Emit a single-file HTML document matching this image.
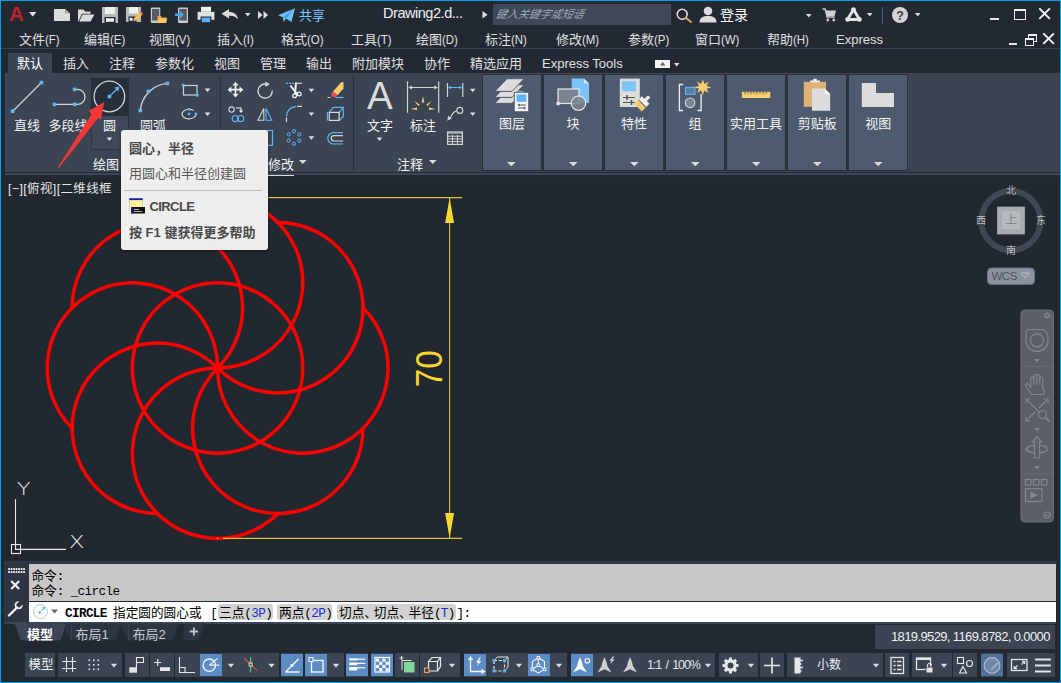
<!DOCTYPE html>
<html lang="zh-CN">
<head>
<meta charset="utf-8">
<title>AutoCAD - Drawing2.dwg</title>
<style>
*{box-sizing:border-box;margin:0;padding:0}
html,body{width:1061px;height:683px;overflow:hidden;background:#222933}
body{font-family:"Liberation Sans","Noto Sans CJK SC",sans-serif;font-size:13px;color:#e6e6e6;position:relative}
.abs{position:absolute}
#win{position:absolute;left:0;top:0;width:1061px;height:683px;background:#222933;border:1px solid #00a0e4;box-shadow:inset 0 0 0 1px #27252d;overflow:hidden}
#root{position:absolute;left:-1px;top:-1px;width:1061px;height:683px}
.t{position:absolute;white-space:nowrap;line-height:1}
/* title bar */
#menubar .t{top:32.500px;font-size:13px;color:#e0e0e0}
#tabs .t{top:56.500px;font-size:13px;color:#e0e0e0}
#tabline{position:absolute;left:1px;top:48px;width:1059px;height:1px;background:#3a4352}
#tabactive{position:absolute;left:8px;top:53px;width:44px;height:21px;background:#3b4453}
#ribbon{position:absolute;left:5px;top:73px;width:1055px;height:102px;background:#3b4453}
.panel{position:absolute;top:74.800px;height:95.400px;background:#4e5a6e}
.plabel{position:absolute;font-size:13.5px;color:#f2f2f2;white-space:nowrap;line-height:1}
#draw{position:absolute;left:1px;top:179px;width:1059px;height:381px;background:#212830}
#cmdhist{position:absolute;left:29px;top:564px;width:1027px;height:37px;background:#c8c8c8}
#cmdline{position:absolute;left:29px;top:602px;width:1027px;height:20px;background:#fff}
.mono{font-family:"Liberation Mono","Noto Sans CJK SC",monospace}
.cm{font-family:"Noto Sans CJK SC",sans-serif;font-size:12.670px;color:#000}
.la{font-family:"Liberation Mono",monospace;font-size:12.670px;letter-spacing:-.63px}
.dn{margin-right:-3.2px}
.pf{display:inline-block;transform:scaleX(.88);transform-origin:0 50%}
.bl{font-weight:normal;color:#1a2ed8}
</style>
</head>
<body>
<div id="win"><div id="root">

<!-- TITLE BAR -->
<div id="titlebar">
<!-- A logo -->
<span class="t" style="left:9px;top:4.400px;font-size:20.500px;font-weight:bold;color:#bf222b;font-family:'Liberation Sans',sans-serif">A</span>
<svg class="abs" style="left:29px;top:12px" width="8" height="5"><path d="M0 0h7.5L3.75 4.5z" fill="#e0e0e0"/></svg>
<!-- new -->
<svg class="abs" style="left:54px;top:8px" width="17" height="14"><path d="M0 1h11l5 4.5V13H0z" fill="#dcdcdc"/><path d="M11 1v4.5h5z" fill="#222933" opacity=".0"/><path d="M11.4 0.6L16.4 5.2" stroke="#222933" stroke-width="0" /><path d="M11 1l5 4.5h-5z" fill="#a8a8a8"/></svg>
<!-- open -->
<svg class="abs" style="left:77px;top:8px" width="18" height="14"><path d="M1 13V1.5h5.5l1.5 2h5.5v2.3H5L1.6 13z" fill="#dcdcdc"/><path d="M5.6 6.6H17.4L13.6 13.4H2.2z" fill="#dcdcdc"/></svg>
<!-- save -->
<svg class="abs" style="left:101px;top:6px" width="18" height="18"><path d="M1 1h16v16H1z" fill="#b9b9b9"/><path d="M4 1h10v7H4z" fill="#f0f0f0"/><path d="M3.5 11h11v6h-11z" fill="#222933"/><path d="M5 12.3h8v3.4H5z" fill="#f0f0f0"/><path d="M5 12.3h2.4v3.4H5z" fill="#f0f0f0"/></svg>
<!-- save as -->
<svg class="abs" style="left:125px;top:6px" width="18" height="18"><path d="M1 1h15v15H1z" fill="#b9b9b9"/><path d="M4 1h9v6.5H4z" fill="#f0f0f0"/><path d="M3.5 10.5h8v5.5h-8z" fill="#222933"/><path d="M4.6 11.8h3v3h-3z" fill="#f0f0f0"/><path d="M8 15.5l1-3.4 5.8-5.8 2.4 2.4-5.8 5.8z" fill="#f2c24a"/><path d="M14.8 6.3l1.2-1.2 2.4 2.4-1.2 1.2z" fill="#e8484f"/><path d="M8 15.5l.5-1.8 1.3 1.3z" fill="#444"/></svg>
<!-- open from mobile -->
<svg class="abs" style="left:150px;top:7px" width="18" height="17"><rect x=".8" y=".5" width="9.5" height="15.5" rx="1" fill="#c9c9c9"/><rect x="2" y="2" width="7.2" height="11.5" fill="#555b66"/><path d="M7.5 16V9h3.4l1 1.4h4.6V16z" fill="#e9a93a"/><path d="M9 11.6h8.2L15.6 16H7.5z" fill="#f6cd6a"/></svg>
<!-- save to mobile -->
<svg class="abs" style="left:175px;top:7px" width="14" height="17"><rect x="3" y=".5" width="10" height="15.5" rx="1" fill="#c9c9c9"/><rect x="4.2" y="2" width="7.6" height="11.5" fill="#555b66"/><path d="M0 6.4h5V4l4 3.7-4 3.700V9H0z" fill="#4aa3ea"/></svg>
<!-- print -->
<svg class="abs" style="left:197px;top:6px" width="18" height="18"><path d="M4 .8h10v5H4z" fill="#f0f0f0"/><path d="M.6 5.8h16.8v8H.6z" fill="#e0e0e0"/><path d="M3.6 10.500h10.800V17H3.6z" fill="#222933"/><path d="M4.800 11.600h8.400v4.600H4.800z" fill="#5db1f3"/></svg>
<!-- undo -->
<svg class="abs" style="left:221px;top:9px" width="18" height="11"><path d="M.5 4.800L8 0v3c5 0 8.600 2.500 9 7.600C15.500 7.800 12.500 6.600 8 6.800V9.600z" fill="#dcdcdc"/></svg>
<svg class="abs" style="left:245px;top:13px" width="6" height="4"><path d="M0 0h5.500L2.750 3.500z" fill="#e0e0e0"/></svg>
<svg class="abs" style="left:258px;top:11px" width="11" height="9"><path d="M0 0l4.500 4L0 8zM5.500 0L10 4 5.500 8z" fill="#e0e0e0"/></svg>
<!-- share -->
<svg class="abs" style="left:278px;top:7.500px" width="18" height="15"><path d="M0 7.200L17 .2 13.400 14 8 10.400 5.600 14.200 5 9.200z" fill="#6ec0fa"/><path d="M5 9.200L17 .2 8 10.400" fill="#4a9ad8"/></svg>
<span class="t" style="left:299px;top:8.500px;font-size:13px;color:#7fc6ff">共享</span>
<span class="t" style="left:383px;top:6px;font-size:14.500px;color:#f0f0f0;letter-spacing:-.46px">Drawing2.d...</span>
<svg class="abs" style="left:482px;top:11px" width="6" height="8"><path d="M.5 0L5.500 3.700.5 7.400z" fill="#e0e0e0"/></svg>
<div class="abs" style="left:493px;top:4px;width:178px;height:21px;background:#3f4859"></div>
<span class="t" style="left:496px;top:9px;font-size:11px;color:#a0a8b4;font-style:italic;transform:skewX(-12deg)">键入关键字或短语</span>
<svg class="abs" style="left:676px;top:8px" width="17" height="15"><circle cx="6.200" cy="6.200" r="5" fill="none" stroke="#e6e6e6" stroke-width="1.500"/><path d="M10 10l5 4" stroke="#d9a760" stroke-width="2" stroke-linecap="round"/></svg>
<!-- user -->
<svg class="abs" style="left:699px;top:6px" width="18" height="17"><circle cx="9" cy="5" r="4.300" fill="#dcdcdc"/><path d="M.5 16.500c0-5 3.500-6.500 8.500-6.500s8.500 1.500 8.500 6.500z" fill="#dcdcdc"/></svg>
<span class="t" style="left:720px;top:8px;font-size:14px;color:#fff">登录</span>
<svg class="abs" style="left:806px;top:14px" width="6" height="4"><path d="M0 0h5.500L2.750 3.500z" fill="#e0e0e0"/></svg>
<!-- cart -->
<svg class="abs" style="left:822px;top:8px" width="15" height="14"><path d="M.5 1h2.600l2 8h7.600" fill="none" stroke="#cfcfcf" stroke-width="1.400"/><path d="M3.600 2.600h10.400l-1.400 5.400H5z" fill="#cfcfcf"/><circle cx="5.800" cy="12" r="1.400" fill="#cfcfcf"/><circle cx="11.800" cy="12" r="1.400" fill="#cfcfcf"/></svg>
<!-- A360 -->
<svg class="abs" style="left:845px;top:7px" width="17" height="15"><path d="M8.500 2.500L2.500 12.500H14.500z" fill="none" stroke="#e6e6e6" stroke-width="2.800" stroke-linejoin="round"/><circle cx="8.500" cy="2.600" r="2.400" fill="#e6e6e6"/><circle cx="2.600" cy="12.400" r="2.300" fill="#e6e6e6"/><circle cx="14.400" cy="12.400" r="2.300" fill="#e6e6e6"/></svg>
<svg class="abs" style="left:867px;top:13px" width="6" height="4"><path d="M0 0h5.500L2.750 3.500z" fill="#e0e0e0"/></svg>
<div class="abs" style="left:882px;top:7px;width:1px;height:17px;background:#4b5c73"></div>
<svg class="abs" style="left:892px;top:7px" width="16" height="16"><circle cx="8" cy="8" r="8" fill="#d4d4d4"/><text x="8" y="12.600" text-anchor="middle" font-family="Liberation Sans,sans-serif" font-weight="bold" font-size="12.500" fill="#3a3f4a">?</text></svg>
<svg class="abs" style="left:915px;top:13px" width="6" height="4"><path d="M0 0h5.500L2.750 3.500z" fill="#e0e0e0"/></svg>
<!-- window buttons -->
<div class="abs" style="left:990px;top:18px;width:9px;height:2px;background:#e6e6e6"></div>
<div class="abs" style="left:1014px;top:9px;width:12px;height:11px;border:1px solid #f0f0f0;border-top-width:2px"></div>
<svg class="abs" style="left:1038px;top:7px" width="13" height="13"><path d="M1.300 1.300l10.600 10.600M11.900 1.300L1.300 11.900" stroke="#f4f4f4" stroke-width="1.900"/></svg>
<!-- doc window buttons -->
<div class="abs" style="left:1009px;top:43px;width:8px;height:2px;background:#e6e6e6"></div>
<div class="abs" style="left:1028px;top:34px;width:9px;height:8px;border:1px solid #f0f0f0;border-top-width:2px"></div>
<div class="abs" style="left:1025px;top:38px;width:9px;height:8px;border:1px solid #f0f0f0;border-top-width:2px;background:#222933"></div>
<svg class="abs" style="left:1042px;top:32px" width="13" height="13"><path d="M1.300 1.300l10.600 10.600M11.900 1.300L1.300 11.900" stroke="#f4f4f4" stroke-width="1.900"/></svg>
</div>

<!-- MENU BAR -->
<div id="menubar">
<span class="t" style="left:19px">文件<span class="pf">(F)</span></span>
<span class="t" style="left:84px">编辑<span class="pf">(E)</span></span>
<span class="t" style="left:149px">视图<span class="pf">(V)</span></span>
<span class="t" style="left:217px">插入<span class="pf">(I)</span></span>
<span class="t" style="left:281px">格式<span class="pf">(O)</span></span>
<span class="t" style="left:351px">工具<span class="pf">(T)</span></span>
<span class="t" style="left:416px">绘图<span class="pf">(D)</span></span>
<span class="t" style="left:485px">标注<span class="pf">(N)</span></span>
<span class="t" style="left:556px">修改<span class="pf">(M)</span></span>
<span class="t" style="left:628px">参数<span class="pf">(P)</span></span>
<span class="t" style="left:695px">窗口<span class="pf">(W)</span></span>
<span class="t" style="left:767px">帮助<span class="pf">(H)</span></span>
<span class="t" style="left:836px">Express</span>
</div>
<div id="tabline"></div>

<!-- RIBBON TABS -->
<div id="tabactive"></div>
<div id="tabs">
<span class="t" style="left:17px;color:#fff">默认</span>
<span class="t" style="left:63px">插入</span>
<span class="t" style="left:109px">注释</span>
<span class="t" style="left:155px">参数化</span>
<span class="t" style="left:214px">视图</span>
<span class="t" style="left:260px">管理</span>
<span class="t" style="left:306px">输出</span>
<span class="t" style="left:352px">附加模块</span>
<span class="t" style="left:424px">协作</span>
<span class="t" style="left:470px">精选应用</span>
<span class="t" style="left:542px">Express Tools</span>
</div>

<!-- RIBBON BODY -->
<div id="ribbon"></div>
<div id="ribboncontent">
<div class="abs" style="left:5px;top:172px;width:1055px;height:1px;background:#262d39"></div><div class="abs" style="left:5px;top:173px;width:1055px;height:2px;background:#3e4757"></div>
<!-- tab extra icon -->
<div class="abs" style="left:655px;top:60px;width:15px;height:8px;background:#f4f4f4"></div>
<svg class="abs" style="left:660px;top:62px" width="6" height="4"><path d="M0 3.500h5.400L2.700 0z" fill="#666"/></svg>
<svg class="abs" style="left:674px;top:63px" width="6" height="4"><path d="M0 0h5.500L2.750 3.500z" fill="#e0e0e0"/></svg>
<!-- circle button highlight -->
<div class="abs" style="left:91px;top:78px;width:37.500px;height:38px;background:#272f3b"></div>
<div class="abs" style="left:91px;top:116px;width:37.500px;height:34px;background:#3f4858;border:1px solid #2d3440;border-top:none"></div>
<!-- separators -->
<div class="abs" style="left:220px;top:75px;width:1px;height:96px;background:#2b323e"></div>
<div class="abs" style="left:353px;top:75px;width:1px;height:96px;background:#2b323e"></div>
<div class="abs" style="left:481.500px;top:73.700px;width:426.800px;height:97.600px;background:#2a313d"></div>
<div class="panel" style="left:482.7px;width:58.4px"></div>
<span class="plabel" style="left:481.9px;width:60px;text-align:center;top:117px;font-size:13px">图层</span>
<svg class="abs" style="left:507.4px;top:161.5px" width="9" height="5"><path d="M0 0h8.600L4.300 4.300z" fill="#dcdcdc"/></svg>
<div class="panel" style="left:543.8px;width:58.4px"></div>
<span class="plabel" style="left:543.0px;width:60px;text-align:center;top:117px;font-size:13px">块</span>
<svg class="abs" style="left:568.5px;top:161.5px" width="9" height="5"><path d="M0 0h8.600L4.300 4.300z" fill="#dcdcdc"/></svg>
<div class="panel" style="left:604.8px;width:58.4px"></div>
<span class="plabel" style="left:604.0px;width:60px;text-align:center;top:117px;font-size:13px">特性</span>
<svg class="abs" style="left:629.5px;top:161.5px" width="9" height="5"><path d="M0 0h8.600L4.300 4.300z" fill="#dcdcdc"/></svg>
<div class="panel" style="left:665.8px;width:58.4px"></div>
<span class="plabel" style="left:665.0px;width:60px;text-align:center;top:117px;font-size:13px">组</span>
<svg class="abs" style="left:690.5px;top:161.5px" width="9" height="5"><path d="M0 0h8.600L4.300 4.300z" fill="#dcdcdc"/></svg>
<div class="panel" style="left:726.9px;width:58.4px"></div>
<span class="plabel" style="left:726.1px;width:60px;text-align:center;top:117px;font-size:13px">实用工具</span>
<svg class="abs" style="left:751.6px;top:161.5px" width="9" height="5"><path d="M0 0h8.600L4.300 4.300z" fill="#dcdcdc"/></svg>
<div class="panel" style="left:788.0px;width:58.4px"></div>
<span class="plabel" style="left:787.2px;width:60px;text-align:center;top:117px;font-size:13px">剪贴板</span>
<svg class="abs" style="left:812.7px;top:161.5px" width="9" height="5"><path d="M0 0h8.600L4.300 4.300z" fill="#dcdcdc"/></svg>
<div class="panel" style="left:849.0px;width:58.4px"></div>
<span class="plabel" style="left:848.2px;width:60px;text-align:center;top:117px;font-size:13px">视图</span>
<svg class="abs" style="left:873.7px;top:161.5px" width="9" height="5"><path d="M0 0h8.600L4.300 4.300z" fill="#dcdcdc"/></svg>
<svg class="abs" style="left:0;top:73px" width="1061" height="103" viewBox="0 73 1061 103">
<g id="ic-line"><path d="M13 111L41 83" stroke="#d4d4d4" stroke-width="1.200"/><rect x="10.800" y="109.400" width="3.600" height="3.600" fill="#62b5f5"/><rect x="39.600" y="80.800" width="3.600" height="3.600" fill="#62b5f5"/></g>
<g id="ic-pline"><path d="M54.500 104.400H77.500a7.500 7.500 0 0 0 0-15H75" fill="none" stroke="#d4d4d4" stroke-width="1.300"/><rect x="52.700" y="102.600" width="3.600" height="3.600" fill="#62b5f5"/><rect x="72.800" y="102.600" width="3.600" height="3.600" fill="#62b5f5"/><rect x="72.800" y="87.600" width="3.600" height="3.600" fill="#62b5f5"/></g>
<g id="ic-circle"><circle cx="109.400" cy="96.500" r="15.300" fill="none" stroke="#d4d4d4" stroke-width="1.300"/><path d="M111 95L117 89" stroke="#62b5f5" stroke-width="1.300"/><path d="M119.400 86.600l-1 5-4-4z" fill="#62b5f5"/><rect x="107.600" y="94.700" width="3.600" height="3.600" fill="#62b5f5"/></g>
<g id="ic-arc"><path d="M140.300 110.400A29.700 29.700 0 0 1 167.400 83.400" fill="none" stroke="#d4d4d4" stroke-width="1.300"/><rect x="138.500" y="108.600" width="3.600" height="3.600" fill="#62b5f5"/><rect x="146.600" y="89.600" width="3.600" height="3.600" fill="#62b5f5"/><rect x="165.600" y="81.600" width="3.600" height="3.600" fill="#62b5f5"/></g>
<g id="ic-rect"><rect x="183.500" y="85.500" width="13.500" height="9.500" fill="none" stroke="#d4d4d4" stroke-width="1.200"/><rect x="181.800" y="83.800" width="2.800" height="2.800" fill="#62b5f5"/><rect x="195.800" y="93.800" width="2.800" height="2.800" fill="#62b5f5"/></g>
<path d="M204.700 88.500h5.600l-2.800 3.500z" fill="#dcdcdc"/>
<g id="ic-ellipse"><path d="M193.500 110.500A7 4.700 0 1 0 195.800 113" fill="none" stroke="#d4d4d4" stroke-width="1.200"/><rect x="187.800" y="112.700" width="2.400" height="2.400" fill="#62b5f5"/><rect x="187.800" y="108" width="2.400" height="2.400" fill="#62b5f5"/><rect x="194.700" y="112.700" width="2.400" height="2.400" fill="#62b5f5"/></g>
<path d="M204.700 112.600h5.600l-2.800 3.500z" fill="#dcdcdc"/>
<!-- modify -->
<g id="ic-move" fill="#f0f0f0"><path d="M235.500 81.800l3.200 3.800h-2.300v3.200h3.200v-2.300l3.800 3.200-3.800 3.200v-2.300h-3.200v3.200h2.300l-3.200 3.800-3.200-3.800h2.300v-3.200h-3.200v2.300l-3.800-3.200 3.800-3.200v2.300h3.200v-3.200h-2.300z"/></g>
<g id="ic-rotate"><path d="M265.100 84A7.100 7.100 0 1 0 272.200 90.600" fill="none" stroke="#e0e0e0" stroke-width="1.300"/><path d="M265.300 81.500l4.400 2.700-4.400 2.900z" fill="#e0e0e0"/></g>
<g id="ic-trim"><path d="M285.800 83.400h8.500" stroke="#62b5f5" stroke-width="1.200" stroke-dasharray="2.200 .8"/><path d="M297 83.300h5" stroke="#d4d4d4" stroke-width="1.200"/><path d="M290.300 85.500l7.500 9.500M296 82.500l-1 12" stroke="#f4f4f4" stroke-width="2"/><circle cx="294.600" cy="95.800" r="1.900" fill="none" stroke="#f4f4f4" stroke-width="1.200"/><circle cx="299.200" cy="94" r="1.900" fill="none" stroke="#f4f4f4" stroke-width="1.200"/></g>
<path d="M308.600 88.800h5.600l-2.800 3.500z" fill="#dcdcdc"/>
<g id="ic-erase"><path d="M333 91.500l8.500-9.500 2 .2v6.300l-6 6.700z" fill="#f5ce6e"/><path d="M333 91.500l4.500 3.700-1.400 1.400c-1.500 1-3.800.6-4.600-.6-.6-1-.2-2.600.5-3.300z" fill="#ee4a5a"/><path d="M327.500 97.500h3" stroke="#d4d4d4" stroke-width="1"/><path d="M335.500 97.500h8" stroke="#62b5f5" stroke-width="1.200"/></g>
<g id="ic-copy"><circle cx="231.600" cy="109.600" r="2.700" fill="none" stroke="#d4d4d4" stroke-width="1.100"/><path d="M236 108h5v3" fill="none" stroke="#f0f0f0" stroke-width="1.200"/><path d="M238.800 110.500h4.400l-2.200 2.600z" fill="#f0f0f0"/><circle cx="235.300" cy="118.600" r="3.100" fill="none" stroke="#62b5f5" stroke-width="1.200"/><circle cx="240.700" cy="118.600" r="3.100" fill="none" stroke="#62b5f5" stroke-width="1.200"/></g>
<g id="ic-mirror"><path d="M263.800 108.500v11.700h-5.800z" fill="none" stroke="#d4d4d4" stroke-width="1.100"/><path d="M266 108.500v11.700h5.800z" fill="none" stroke="#62b5f5" stroke-width="1.100"/></g>
<g id="ic-fillet"><path d="M286.500 116.300A9.800 9.800 0 0 1 295.800 106.500" fill="none" stroke="#62b5f5" stroke-width="1.300"/><path d="M286.500 117.300v4.700M297 106.400h5" stroke="#d4d4d4" stroke-width="1.200"/></g>
<path d="M308.600 112.600h5.600l-2.800 3.500z" fill="#dcdcdc"/>
<g id="ic-box"><path d="M329.200 112.300L333.200 107.400H343.300L339.200 112.300M343.300 107.400V116.400L339.200 120.400M327.400 112V120.500" fill="none" stroke="#62b5f5" stroke-width="1.100"/><rect x="329.300" y="112.400" width="9.800" height="8" fill="none" stroke="#dcdcdc" stroke-width="1.200"/></g>
<g id="ic-stretch"><rect x="262" y="130.500" width="10.500" height="14.800" fill="none" stroke="#62b5f5" stroke-width="1.200"/></g>
<g id="ic-array" fill="none" stroke="#62b5f5" stroke-width="1"><circle cx="294" cy="131.300" r="1.600"/><circle cx="299.300" cy="134.400" r="1.600"/><circle cx="299.300" cy="140.600" r="1.600"/><circle cx="294" cy="143.800" r="1.600"/><circle cx="288.700" cy="140.600" r="1.600"/><circle cx="288.700" cy="134.400" r="1.600"/></g>
<path d="M308.600 136.200h5.600l-2.800 3.500z" fill="#dcdcdc"/>
<g id="ic-offset" fill="none"><path d="M343 132.600h-9.500a5.700 5.700 0 0 0 0 11.400H343" stroke="#62b5f5" stroke-width="1.200"/><path d="M343 135.600h-9a2.700 2.700 0 0 0 0 5.400H343" stroke="#d4d4d4" stroke-width="1.200"/></g>
<!-- annotate -->
<g id="ic-dim"><path d="M407.500 81.200v31.600M438.700 81.200v31.600" stroke="#d4d4d4" stroke-width="1.200"/><path d="M410 87.500h26" stroke="#d4d4d4" stroke-width="1"/><path d="M408.200 87.500l3.800-2v4zM438 87.500l-3.800-2v4z" fill="#d4d4d4"/><g fill="#f5ce6e"><path d="M423 96l1.300 6.500h-2.600z"/><path d="M414.500 101l5.200 3.400-1.400 1.700z"/><path d="M431.500 101l-5.200 3.400 1.400 1.700z"/><path d="M410.500 109l6.500-1.600v2.700z"/><path d="M435.500 109l-6.500-1.600v2.700z"/></g></g>
<g id="ic-lin"><path d="M447.500 83v14M462.800 83v14" stroke="#d4d4d4" stroke-width="1.200"/><path d="M449 87.500h12" stroke="#62b5f5" stroke-width="1"/><path d="M448 87.500l3-1.700v3.400zM462.200 87.500l-3-1.700v3.400z" fill="#62b5f5"/></g>
<path d="M469.900 88.800h5.600l-2.800 3.500z" fill="#dcdcdc"/>
<g id="ic-leader"><circle cx="459.800" cy="110.400" r="3" fill="none" stroke="#d4d4d4" stroke-width="1.100"/><path d="M456.800 111c-3.500.3-4.500 3-6.500 7" fill="none" stroke="#d4d4d4" stroke-width="1.100"/><path d="M447.300 120.800l.8-5 3.800 2.600z" fill="#d4d4d4"/></g>
<path d="M469.900 112.600h5.600l-2.800 3.500z" fill="#dcdcdc"/>
<g id="ic-table"><rect x="447.600" y="132" width="14.800" height="12.400" fill="none" stroke="#d4d4d4" stroke-width="1.200"/><path d="M447.600 133h14.800M447.600 136.200h14.800M447.600 138.900h14.800M447.600 141.600h14.800M452.500 135v9.400M457.500 135v9.400" stroke="#d4d4d4" stroke-width="1"/></g>
<path d="M299 160h7.600l-3.800 4z" fill="#dcdcdc"/>
<path d="M429 160h7.600l-3.800 4z" fill="#dcdcdc"/>
<path d="M106.600 137.500h5.600l-2.800 3.500z" fill="#dcdcdc"/>
<path d="M376.700 137.500h5.600l-2.800 3.500z" fill="#dcdcdc"/>
</svg>
<svg class="abs" style="left:0;top:73px" width="1061" height="103" viewBox="0 73 1061 103">
<!-- layers -->
<g id="ic-layers"><path d="M507 90.7H524.200L512 103.4H494.800z" fill="#dcdcdc" stroke="#4e5a6e" stroke-width="1"/><path d="M507 84.7H524.200L512 97.4H494.800z" fill="#dcdcdc" stroke="#4e5a6e" stroke-width="1"/><path d="M507 78.7H524.200L512 91.4H494.800z" fill="#dcdcdc" stroke="#4e5a6e" stroke-width="1"/><rect x="513.800" y="91.800" width="15.200" height="20.200" fill="#4e5a6e"/><rect x="514.800" y="92.800" width="13.400" height="18.400" fill="#f4f4f4"/><rect x="516.500" y="94.400" width="9.800" height="7.400" fill="#62b5f5"/><path d="M518 105h7.500M518 108h7.500" stroke="#555" stroke-width="1"/><path d="M517.600 105l2.200-1.600v3.200zM526 108l-2.200-1.600v3.200z" fill="#555"/></g>
<!-- block -->
<g id="ic-block"><path d="M571.700 78.600h12.300l5.100 5v19.200h-17.400z" fill="#7cc4fa"/><path d="M584 78.600v5h5.100z" fill="#cfe8fb"/><rect x="558" y="89" width="21" height="14.500" fill="#7b8494" stroke="#e6e6e6" stroke-width="1.200"/><circle cx="578.500" cy="103.200" r="7.200" fill="#7b8494" fill-opacity=".85" stroke="#e6e6e6" stroke-width="1.200"/><rect x="556.500" y="102" width="3.200" height="3.200" fill="#e6e6e6"/></g>
<!-- properties -->
<g id="ic-prop"><rect x="619.800" y="78.600" width="20" height="28.400" fill="#dcdcdc"/><rect x="622" y="81.300" width="14" height="10" fill="#7cc4fa"/><path d="M623 97.500h12M623 102.500h12" stroke="#555" stroke-width="1"/><path d="M627 95v5M631.500 100v5" stroke="#555" stroke-width="1.600"/><g transform="translate(641.800 103.800) rotate(45)"><rect x="-5.400" y="-.2" width="10.800" height="5.600" fill="#f5ce6e"/><rect x="-5.400" y="-5.400" width="10.800" height="4.600" fill="#f4f4f4"/><rect x="-1.700" y="-10.500" width="3.400" height="6" rx="1" fill="#f4f4f4"/><path d="M-5.400 -.5h10.800" stroke="#4e5a6e" stroke-width=".9"/></g></g>
<!-- group -->
<g id="ic-group"><path d="M683 84.500h-3.600v26h3.600M697.500 110.500h3.600V94" fill="none" stroke="#f0f0f0" stroke-width="1.300"/><rect x="685.500" y="87.300" width="9.500" height="7" fill="#5a7ea6" stroke="#62b5f5" stroke-width="1.100"/><circle cx="690.100" cy="102.800" r="4.800" fill="#7b8494" stroke="#d4d4d4" stroke-width="1.100"/><path d="M702.800 79.300l1.600 4.800 4.200-2.600-2 4.400 4.900 1.400-4.900 1.400 2 4.400-4.200-2.600-1.600 4.800-1.600-4.800-4.200 2.600 2-4.400-4.900-1.400 4.900-1.400-2-4.400 4.200 2.600z" fill="#f5ce6e"/></g>
<!-- utilities ruler -->
<g id="ic-ruler"><rect x="741.800" y="91.800" width="28.500" height="6.200" fill="#f5ce6e"/><path d="M745 91.800v2.500M748 91.800v2M751 91.800v2.500M754 91.800v2M757 91.800v2.500M760 91.800v2M763 91.800v2.500M766 91.800v2" stroke="#7a6a3a" stroke-width="1"/></g>
<!-- clipboard -->
<g id="ic-clip"><rect x="803.800" y="81.800" width="22.200" height="25" fill="#deb272"/><path d="M810 82.200v-1.800h3.300v-1.600h3.400v1.600h3.300v1.800z" fill="#f2f2f2"/><path d="M812 88.600h12.600l5.600 5.400v16.700h-18.200z" fill="#dcdcdc"/><path d="M824.600 88.600v5.400h5.600z" fill="#f6f6f6"/></g>
<!-- view -->
<g id="ic-view"><path d="M861.800 83h14.200v10h18v14h-32.200z" fill="#dcdcdc"/></g>
</svg>
<span class="plabel" style="left:14px;top:118.800px;font-size:13px">直线</span>
<span class="plabel" style="left:48.400px;top:118.800px;font-size:13px">多段线</span>
<span class="plabel" style="left:103px;top:118.800px;font-size:13px">圆</span>
<span class="plabel" style="left:140px;top:118.800px;font-size:13px">圆弧</span>
<span class="plabel" style="left:93px;top:157.500px;font-size:13px">绘图</span>
<span class="plabel" style="left:268px;top:157.500px;font-size:13px">修改</span>
<span class="plabel" style="left:397px;top:157.500px;font-size:13px">注释</span>
<span class="plabel" style="left:367px;top:118.800px;font-size:13px">文字</span>
<span class="plabel" style="left:410px;top:118.800px;font-size:13px">标注</span>
<span class="t" style="left:367px;top:77.300px;font-size:38.500px;color:#dcdcdc;font-family:'Liberation Sans',sans-serif">A</span>
</div>

<!-- DRAWING AREA -->
<div id="draw"></div>
<div id="drawcontent">
<svg class="abs" style="left:1px;top:179px" width="1059" height="382" viewBox="1 179 1059 382">
<g fill="none" stroke="#ff0000" stroke-width="3.500">
<circle cx="217.6" cy="368.0" r="85.2"/>
<path d="M217.6 368.0A85.2 85.2 0 1 0 363.05 307.75"/>
<path d="M217.6 368.0A85.2 85.2 0 1 0 363.05 428.25"/>
<path d="M217.6 368.0A85.2 85.2 0 1 0 277.85 513.45"/>
<path d="M217.6 368.0A85.2 85.2 0 1 0 157.35 513.45"/>
<path d="M217.6 368.0A85.2 85.2 0 1 0 72.15 428.25"/>
<path d="M217.6 368.0A85.2 85.2 0 1 0 72.15 307.75"/>
<path d="M217.6 368.0A85.2 85.2 0 1 0 157.35 222.55"/>
<path d="M217.6 368.0A85.2 85.2 0 1 0 277.85 222.55"/>
</g>
<g stroke="#e3c42c" stroke-width="1.100" fill="none"><path d="M217 197.600H462M223 538.400H462M449.600 198V538"/><path d="M216.900 538.400h1.200" stroke="#f5d730"/></g>
<path d="M449.600 197.800l4.500 25.200h-9zM449.600 538.200l4.500-25.200h-9z" fill="#f5d730"/>
<text x="0" y="0" transform="translate(442.300 368.700) rotate(-90) scale(.924 1)" text-anchor="middle" font-family="Liberation Sans,sans-serif" font-size="36" fill="#f5d730">70</text>
<!-- UCS -->
<g stroke="#e8e8e8" stroke-width="1.100" fill="none"><path d="M15.500 499V549.400H66"/><rect x="11.500" y="544.500" width="9" height="9"/></g>
<text transform="translate(23.600 494.800) scale(1.32 1)" text-anchor="middle" font-family="DejaVu Sans,Liberation Sans,sans-serif" font-weight="200" font-size="17.200" fill="#e8e8e8">Y</text>
<text transform="translate(76.600 548) scale(1.3 1)" text-anchor="middle" font-family="DejaVu Sans,Liberation Sans,sans-serif" font-weight="200" font-size="17.800" fill="#e8e8e8">X</text>
<!-- viewcube -->
<circle cx="1010.900" cy="220.700" r="29.600" fill="none" stroke="#414853" stroke-width="6"/>
<rect x="997.100" y="206.600" width="27.800" height="27.800" fill="#a9acaf"/>
<rect x="1002" y="211.200" width="18" height="17.800" fill="#b5babe"/>
<rect x="987.500" y="268" width="47" height="16.400" rx="4" fill="#8d92a0" stroke="#6b7182" stroke-width="1"/>
<path d="M1021 273h8.400l-4.200 5z" fill="none" stroke="#b9bdc8" stroke-width="1"/>
<!-- navbar -->
<rect x="1021" y="310" width="32.400" height="212" rx="4" fill="#5b6068" stroke="#70757e" stroke-width="1"/>
<g fill="none" stroke="#80858e" stroke-width="1.200">
<circle cx="1047.200" cy="315.400" r="3" fill="#80858e" stroke="none"/>
<path d="M1045.800 314l2.800 2.800M1048.600 314l-2.800 2.800" stroke="#5b6068" stroke-width="1"/>
<path d="M1029 329.500h12a7 7 0 0 1 7 7v4a11 11 0 0 1-22 0v-8a3 3 0 0 1 3-3z"/>
<circle cx="1037" cy="340.400" r="6.500"/>
<path d="M1021.500 366.400h31.400M1021.500 473.600h31.400" stroke="#666b74" stroke-width="1"/>
<path d="M1031.500 394.500C1029.500 391.500 1027.500 388 1025.500 385.500C1025 383.800 1027.200 383 1028.600 384.500L1030.800 387.500V378a1.500 1.500 0 0 1 3 0V384V375.500a1.500 1.500 0 0 1 3 0V384V376a1.500 1.500 0 0 1 3 0V384.500V378.500a1.500 1.500 0 0 1 3 0V388.500C1045.800 391.500 1044.800 393 1043.500 394.500z" stroke-linejoin="round"/>
<path d="M1026 399l14 14M1048 399l-9 9M1026 421l9-9"/>
<path d="M1026 403.500v-4.500h4.500M1043.500 399h4.500v4.500M1026 416.500v4.500h4.500"/>
<circle cx="1042.500" cy="414.500" r="4"/><path d="M1045.500 417.500l4 4" stroke-width="2"/>
<ellipse cx="1037" cy="449" rx="10.500" ry="4"/>
<path d="M1034.500 458v-16h-2l4.500-5.500 4.500 5.500h-2v16z" fill="#5b6068"/>
<path d="M1029 452l-3.500-2.500 3.500-2.500" />
<rect x="1025.500" y="479.500" width="5.500" height="5.500"/><rect x="1033.500" y="479.500" width="5.500" height="5.500"/><rect x="1041.500" y="479.500" width="5.500" height="5.500"/>
<rect x="1025.500" y="488.700" width="16.500" height="12.800"/>
<circle cx="1047.200" cy="515" r="3"/><path d="M1045.200 515h4" />
</g>
<path d="M1034.200 359h5.600l-2.800 3.400zM1034.200 428h5.600l-2.800 3.400zM1034.200 466h5.600l-2.800 3.400z" fill="#80858e"/>
<path d="M1030.500 491.500l7.500 3.600-7.500 3.600z" fill="#80858e"/>
</svg>
<span class="t" id="vplabel" style="left:8px;top:182.800px;font-size:12.500px;color:#e6e6e6;letter-spacing:.35px">[−][俯视][二维线框</span>
<span class="t" style="left:1006px;top:186px;font-size:10px;font-weight:300;color:#e6e6e6">北</span>
<span class="t" style="left:1006px;top:246px;font-size:10px;font-weight:300;color:#e6e6e6">南</span>
<span class="t" style="left:976px;top:215.700px;font-size:10px;font-weight:300;color:#e6e6e6">西</span>
<span class="t" style="left:1036px;top:215.700px;font-size:10px;font-weight:300;color:#e6e6e6">东</span>
<span class="t" style="left:1005px;top:214px;font-size:12.500px;font-weight:300;color:#63676d">上</span>
<span class="t" style="left:991.500px;top:270.500px;font-size:11.500px;color:#4e535e;letter-spacing:-.5px">WCS</span>
<div class="abs" style="left:266px;top:175px;width:28px;height:1px;background:#dedede"></div>
<!-- red arrow -->
<svg class="abs" style="left:50px;top:95px" width="70" height="80" viewBox="50 95 70 80"><path d="M58 166.900L91.500 114.300 88.600 111.100 104.200 102 101 119.600 98.200 118 59.200 167.600z" fill="#f53636"/></svg>
<!-- tooltip -->
<div class="abs" style="left:121px;top:130px;width:147px;height:120px;background:#eeeeee;border-radius:3px;box-shadow:0 1px 3px rgba(0,0,0,.45)"></div>
<span class="t" style="left:129px;top:142px;font-size:13px;font-weight:bold;color:#484848">圆心，半径</span>
<span class="t" style="left:129px;top:166.500px;font-size:13px;color:#585858">用圆心和半径创建圆</span>
<div class="abs" style="left:123.500px;top:190px;width:138px;height:1px;background:#bdbdbd"></div>
<svg class="abs" style="left:129px;top:198px" width="17" height="16"><rect x=".5" y=".5" width="13" height="12" fill="#f8f49a" stroke="#c8c48a" stroke-width=".6"/><rect x=".3" y=".3" width="13.400" height="1.800" fill="#1818b8"/><rect x="2.200" y="9" width="13.800" height="6.500" fill="#111"/><rect x="2.200" y="9" width="1.500" height="6.500" fill="#1818b8"/><path d="M5 11.500h5M5 13.500h8" stroke="#ddd" stroke-width=".8"/></svg>
<span class="t" style="left:149.500px;top:199.500px;font-size:13px;font-weight:bold;color:#484848;letter-spacing:-.6px">CIRCLE</span>
<span class="t" style="left:129px;top:226px;font-size:13px;font-weight:bold;color:#484848">按 F1 键获得更多帮助</span>
</div>

<!-- COMMAND LINE -->
<div id="cmdhist"></div>
<div id="cmdline"></div>
<div id="cmdcontent">
<div class="abs" style="left:4px;top:561px;width:1053px;height:3px;background:#303845"></div><div class="abs" style="left:4px;top:564px;width:25px;height:58px;background:#2e3542"></div>
<svg class="abs" style="left:8px;top:568px" width="18" height="6"><g fill="#f4f4f4"><rect x="0.2" y="0.1" width="1.700" height="1.900"/><rect x="2.7" y="0.1" width="1.700" height="1.900"/><rect x="5.2" y="0.1" width="1.700" height="1.900"/><rect x="7.7" y="0.1" width="1.700" height="1.900"/><rect x="10.2" y="0.1" width="1.700" height="1.900"/><rect x="12.7" y="0.1" width="1.700" height="1.900"/><rect x="15.2" y="0.1" width="1.700" height="1.900"/><rect x="0.2" y="3.1" width="1.700" height="1.900"/><rect x="2.7" y="3.1" width="1.700" height="1.900"/><rect x="5.2" y="3.1" width="1.700" height="1.900"/><rect x="7.7" y="3.1" width="1.700" height="1.900"/><rect x="10.2" y="3.1" width="1.700" height="1.900"/><rect x="12.7" y="3.1" width="1.700" height="1.900"/><rect x="15.2" y="3.1" width="1.700" height="1.900"/></g></svg>
<svg class="abs" style="left:10px;top:580px" width="11" height="11"><path d="M1.200 1l8 8M9.200 1L1.200 9" stroke="#f4f4f4" stroke-width="2"/></svg>
<svg class="abs" style="left:7px;top:601px" width="17" height="16"><path d="M2 14.500l8-8" stroke="#f0f0f0" stroke-width="2.400" stroke-linecap="round"/><path d="M15.500 3.500l-3 3-2.600-.6-.6-2.600 3-3c-2.500-.6-5.200 1.400-4.600 4.400l.4 1.700 1.300 1.300 1.700.4c3 .6 5-2.100 4.400-4.600z" fill="#f0f0f0"/></svg>
<span class="t cm" style="left:31.400px;top:568.900px">命令<span class="la">: </span></span>
<span class="t cm" style="left:31.400px;top:584px">命令<span class="la">: _circle</span></span>
<svg class="abs" style="left:32px;top:603px" width="30" height="17"><circle cx="8.500" cy="8.500" r="7" fill="#fff" stroke="#c4c4c4" stroke-width="1"/><rect x="6.600" y="8.400" width="2.200" height="2.200" fill="#4aa3ea"/><path d="M9.500 7.500l2.500-2.500" stroke="#4aa3ea" stroke-width="1"/><path d="M13.200 3.800l-.6 3-2.400-2.400z" fill="#4aa3ea"/><path d="M19 6.500h7l-3.500 4z" fill="#6a6a6a"/></svg>
<span class="t cm" style="left:65px;top:605.700px;color:#000"><span class="la" style="font-weight:bold">CIRCLE</span></span>
<span class="t cm" style="left:113px;top:605.700px;color:#000">指定圆的圆心或</span>
<span class="t cm" style="left:210.300px;top:605.700px;color:#000"><span class="la">[</span></span>
<div class="abs" style="left:217.500px;top:603.500px;width:55px;height:16.500px;background:#d2d2d2;border-radius:3px"></div>
<div class="abs" style="left:277px;top:603.500px;width:55px;height:16.500px;background:#d2d2d2;border-radius:3px"></div>
<div class="abs" style="left:337px;top:603.500px;width:119px;height:16.500px;background:#d2d2d2;border-radius:3px"></div>
<span class="t cm" style="left:219px;top:605.700px;color:#000">三点<span class="la">(<b class="bl">3P</b>)</span></span>
<span class="t cm" style="left:279px;top:605.700px;color:#000">两点<span class="la">(<b class="bl">2P</b>)</span></span>
<span class="t cm" style="left:339px;top:605.700px;color:#000">切点<span class="dn">、</span>切点<span class="dn">、</span>半径<span class="la">(<b class="bl">T</b>)</span></span>
<span class="t cm" style="left:456.500px;top:605.700px;color:#000"><span class="la">]:</span></span>
</div>

<!-- LAYOUT TABS + STATUS BAR -->
<div id="layouttabs">
<svg class="abs" style="left:0;top:622px" width="1061" height="20" viewBox="0 622 1061 20">
<rect x="4" y="622" width="1052" height="2" fill="#3b4555"/>
<path d="M62 623.500H123c-4.500 0-4 17-9 17H71z" fill="#2d3542"/>
<path d="M120 623.500H180c-4.500 0-4 17-9 17H128z" fill="#2d3542"/>
<path d="M71.500 624v16.500M128.500 624v16.500" stroke="#394250" stroke-width="1"/>
<path d="M186 623.500H205.500c-4 0-3.500 17-9 17H181c4.500 0 1-17 5-17z" fill="#2d3542"/>
<path d="M12.500 623.500c6 0 4.500 17 10.500 17H58.500c6 0 4.500-17 9-17z" fill="#3b4555"/>
<path d="M189.800 631.500h8.200M193.900 627.400v8.200" stroke="#c4c4c4" stroke-width="1.800"/>
</svg>
<span class="t" style="left:27px;top:627.500px;font-size:13px;font-weight:bold;color:#fff">模型</span>
<span class="t" style="left:75.500px;top:627.500px;font-size:13px;color:#c4c8cf">布局1</span>
<span class="t" style="left:132.500px;top:627.500px;font-size:13px;color:#c4c8cf">布局2</span>
<div class="abs" style="left:875px;top:625px;width:180px;height:24px;background:#3b4453"></div>
<span class="t" id="coords" style="left:891px;top:630px;font-size:13px;color:#f0f0f0;letter-spacing:-.62px">1819.9529, 1169.8782, 0.0000</span>
</div>
<div id="status">
<div class="abs" style="left:25px;top:653px;width:30px;height:24px;background:#3b4453"></div>
<div class="abs" style="left:58px;top:653px;width:64px;height:24px;background:#3b4453"></div>
<div class="abs" style="left:125px;top:653px;width:23.8px;height:24px;background:#3b4453"></div>
<div class="abs" style="left:150.4px;top:653px;width:23.3px;height:24px;background:#3b4453"></div>
<div class="abs" style="left:175.3px;top:653px;width:24.7px;height:24px;background:#3b4453"></div>
<div class="abs" style="left:200px;top:653px;width:22px;height:24px;background:#5b8cc4;border:solid #3b4453;border-width:1px 0"></div>
<div class="abs" style="left:222px;top:653px;width:56.7px;height:24px;background:#3b4453"></div>
<div class="abs" style="left:280.9px;top:653px;width:21.8px;height:24px;background:#5b8cc4;border:solid #3b4453;border-width:1px 0"></div>
<div class="abs" style="left:305.3px;top:653px;width:21.4px;height:24px;background:#5b8cc4;border:solid #3b4453;border-width:1px 0"></div>
<div class="abs" style="left:326.7px;top:653px;width:17.3px;height:24px;background:#3b4453"></div>
<div class="abs" style="left:346px;top:653px;width:22.2px;height:24px;background:#5b8cc4;border:solid #3b4453;border-width:1px 0"></div>
<div class="abs" style="left:370.6px;top:653px;width:22.7px;height:24px;background:#5b8cc4;border:solid #3b4453;border-width:1px 0"></div>
<div class="abs" style="left:395px;top:653px;width:24px;height:24px;background:#3b4453"></div>
<div class="abs" style="left:420.3px;top:653px;width:39.7px;height:24px;background:#3b4453"></div>
<div class="abs" style="left:464px;top:653px;width:22px;height:24px;background:#5b8cc4;border:solid #3b4453;border-width:1px 0"></div>
<div class="abs" style="left:486px;top:653px;width:42px;height:24px;background:#3b4453"></div>
<div class="abs" style="left:528px;top:653px;width:22px;height:24px;background:#5b8cc4;border:solid #3b4453;border-width:1px 0"></div>
<div class="abs" style="left:550px;top:653px;width:17px;height:24px;background:#3b4453"></div>
<div class="abs" style="left:571px;top:653px;width:22px;height:24px;background:#5b8cc4;border:solid #3b4453;border-width:1px 0"></div>
<div class="abs" style="left:593px;top:653px;width:122.4px;height:24px;background:#3b4453"></div>
<div class="abs" style="left:719px;top:653px;width:39.4px;height:24px;background:#3b4453"></div>
<div class="abs" style="left:760px;top:653px;width:24px;height:24px;background:#3b4453"></div>
<div class="abs" style="left:787.4px;top:653px;width:95.9px;height:24px;background:#3b4453"></div>
<div class="abs" style="left:885.4px;top:653px;width:23.6px;height:24px;background:#3b4453"></div>
<div class="abs" style="left:912px;top:653px;width:40px;height:24px;background:#3b4453"></div>
<div class="abs" style="left:952.8px;top:653px;width:24.0px;height:24px;background:#3b4453"></div>
<div class="abs" style="left:980.7px;top:653px;width:22.7px;height:24px;background:#4f709b;border:solid #3b4453;border-width:1px 0"></div>
<div class="abs" style="left:1007px;top:653px;width:48px;height:24px;background:#3b4453"></div>
<span class="t" style="left:28.500px;top:658.500px;font-size:12.500px;color:#f0f0f0">模型</span>
<span class="t" id="scale" style="left:647px;top:658.500px;font-size:12.500px;color:#e6e6e6;letter-spacing:-1.1px;word-spacing:2px">1:1 / 100%</span>
<span class="t" style="left:817px;top:658.500px;font-size:12px;color:#f0f0f0">小数</span>
<svg class="abs" style="left:0;top:650px" width="1061" height="30" viewBox="0 650 1061 30">
<g stroke="#e6e6e6" stroke-width="1.100" fill="none"><path d="M62.300 661.500h14M62.300 668.500h14M66.500 657v15M72.500 657v15"/></g><g fill="#e6e6e6"><rect x="88.5" y="659.5" width="1.600" height="1.600"/><rect x="88.5" y="664.0" width="1.600" height="1.600"/><rect x="88.5" y="668.5" width="1.600" height="1.600"/><rect x="93.0" y="659.5" width="1.600" height="1.600"/><rect x="93.0" y="664.0" width="1.600" height="1.600"/><rect x="93.0" y="668.5" width="1.600" height="1.600"/><rect x="97.5" y="659.5" width="1.600" height="1.600"/><rect x="97.5" y="664.0" width="1.600" height="1.600"/><rect x="97.5" y="668.5" width="1.600" height="1.600"/></g><path d="M110.8 663.7h6.400l-3.200 3.800z" fill="#dcdcdc"/><path d="M136.500 667.500V657.500H143.500V662.500H136.500" fill="none" stroke="#e6e6e6" stroke-width="1.100"/><rect x="129.300" y="667.300" width="7.700" height="5.400" fill="#e6e6e6"/><path d="M154.200 662.500h7M157.700 659v7" stroke="#e6e6e6" stroke-width="1.200"/><rect x="160" y="667.200" width="10" height="3.800" fill="#e6e6e6"/><path d="M179.500 657v15.500h15.500M179.500 667.500h5.500v5" fill="none" stroke="#e6e6e6" stroke-width="1.100"/><circle cx="209.300" cy="665.200" r="6.200" fill="none" stroke="#f4f4f4" stroke-width="1.300"/><path d="M209.300 665.200h10M209.300 665.200l8.200-6.800" stroke="#f4f4f4" stroke-width="1.200"/><path d="M227.8 663.7h6.400l-3.200 3.800z" fill="#dcdcdc"/><path d="M250.600 657v15.500" stroke="#49c46a" stroke-width="1.300"/><path d="M244.200 658l12.800 12.600" stroke="#e2494c" stroke-width="1.200"/><rect x="249.100" y="663" width="3" height="3" fill="#3b4453" stroke="#f0f0f0" stroke-width=".9"/><path d="M268.3 663.7h6.400l-3.200 3.800z" fill="#dcdcdc"/><path d="M285.500 672h14M285.500 672l13-13" stroke="#f4f4f4" stroke-width="1.500" fill="none"/><rect x="290.500" y="664" width="3" height="3" fill="#f4f4f4"/><rect x="311.500" y="660.500" width="11.500" height="11.500" fill="none" stroke="#f4f4f4" stroke-width="1.400"/><rect x="309" y="657.500" width="4" height="4" fill="#5b87c5" stroke="#f4f4f4" stroke-width="1"/><path d="M332.8 663.7h6.400l-3.200 3.800z" fill="#dcdcdc"/><g fill="#f8f8f8"><rect x="349.200" y="658.300" width="8" height="2.100"/><rect x="357" y="658.600" width="8.200" height="1.200"/><rect x="349.200" y="662.500" width="8" height="2.700"/><rect x="357" y="662.800" width="8.200" height="1.200"/><rect x="349.200" y="667" width="8" height="3.500"/><rect x="357" y="667.200" width="8.200" height="1.200"/></g><rect x="375" y="657.500" width="14.500" height="14.500" fill="none" stroke="#f4f4f4" stroke-width="1.300"/><g fill="#f4f4f4"><rect x="376.0" y="658.5" width="3.200" height="3.200"/><rect x="376.0" y="664.9" width="3.200" height="3.200"/><rect x="379.2" y="661.7" width="3.200" height="3.200"/><rect x="379.2" y="668.1" width="3.200" height="3.200"/><rect x="382.4" y="658.5" width="3.200" height="3.200"/><rect x="382.4" y="664.9" width="3.200" height="3.200"/><rect x="385.6" y="661.7" width="3.200" height="3.200"/><rect x="385.6" y="668.1" width="3.200" height="3.200"/></g><rect x="404" y="662" width="10.500" height="10.500" fill="#7fd79a"/><path d="M402 660.500h9.500M402 660.500v9.500" stroke="#e6e6e6" stroke-width="1"/><path d="M399.500 658h4M401.500 656v4" stroke="#e6e6e6" stroke-width="1"/><path d="M428.500 661.500h9v9.500h-9zM428.500 661.500l3.500-4h8.500l-3 4M440.500 657.500v9l-3 4.500" fill="none" stroke="#e6e6e6" stroke-width="1.200"/><rect x="424.500" y="668" width="4.500" height="4.500" fill="#3b4453" stroke="#e9a05e" stroke-width="1.100"/><path d="M448.8 663.7h6.400l-3.200 3.800z" fill="#dcdcdc"/><path d="M470.500 659v12.500h12.500" fill="none" stroke="#f4f4f4" stroke-width="1.400"/><path d="M470.500 656l2.800 4h-5.600zM485.500 671.500l-4 2.800v-5.600z" fill="#f4f4f4"/><path d="M479.500 657.500l-3.500 5h2.500l-2 4 5-5.500h-2.800l2.300-3.500z" fill="#f4f4f4"/><rect x="494" y="660.500" width="10.500" height="10.500" fill="none" stroke="#e6e6e6" stroke-width="1.200" stroke-dasharray="3 1.800"/><path d="M494 660.500l3.500-3.500h10.500v10l-3.500 4M504.500 660.500l3.500-3.500" fill="none" stroke="#e6e6e6" stroke-width="1"/><g fill="#5db1f3"><rect x="492.500" y="659" width="3" height="3"/><rect x="503" y="659" width="3" height="3"/><rect x="492.500" y="669.500" width="3" height="3"/><rect x="503" y="669.500" width="3" height="3"/></g><path d="M515.8 663.7h6.400l-3.200 3.800z" fill="#dcdcdc"/><path d="M538.400 657.800L532.300 661.500V669.400L538.400 673 544.500 669.400V661.500zM538.400 657.800V665.200M538.400 665.200L532.300 669.400M538.400 665.200L544.500 669.400" fill="none" stroke="#f6f6f6" stroke-width="1.100" stroke-linejoin="round"/><g fill="#5b8cc4" stroke="#f6f6f6" stroke-width="1"><rect x="537.100" y="656.500" width="2.600" height="2.600"/><rect x="537.100" y="663.900" width="2.600" height="2.600"/><rect x="531" y="668.100" width="2.600" height="2.600"/><rect x="543.200" y="668.100" width="2.600" height="2.600"/></g><path d="M555.8 663.7h6.400l-3.200 3.800z" fill="#dcdcdc"/><path d="M580.0 657.300C581.4 660.500 582.6 663.500 582.9 666L587.0 672.400 580.0 669.300 573.0 672.400 577.1 666C577.4 663.500 578.6 660.500 580.0 657.300z" fill="#f4f4f4"/><circle cx="587.300" cy="660.800" r="2.300" fill="none" stroke="#f4f4f4" stroke-width="1.100"/><path d="M604.5 657.300C605.9 660.500 607.1 663.500 607.4 666L611.5 672.400 604.5 669.300 597.5 672.400 601.6 666C601.9 663.500 603.1 660.500 604.5 657.300z" fill="#d0d0d0"/><path d="M613 656.500l-3.600 4.300h2.300l-2.200 3.700 5.200-5h-2.500l2.300-3z" fill="#d8d8d8"/><path d="M630.0 657.300C631.4 660.500 632.6 663.500 632.9 666L637.0 672.400 630.0 669.300 623.0 672.400 627.1 666C627.4 663.500 628.6 660.500 630.0 657.300z" fill="#d0d0d0"/><path d="M704.8 663.7h6.400l-3.200 3.800z" fill="#dcdcdc"/><g transform="translate(730.500 665.500)"><circle r="4.600" fill="none" stroke="#e6e6e6" stroke-width="3.200"/><rect x="-1.500" y="-8" width="3" height="3.500" fill="#e6e6e6" transform="rotate(0)"/><rect x="-1.500" y="-8" width="3" height="3.500" fill="#e6e6e6" transform="rotate(45)"/><rect x="-1.500" y="-8" width="3" height="3.500" fill="#e6e6e6" transform="rotate(90)"/><rect x="-1.500" y="-8" width="3" height="3.500" fill="#e6e6e6" transform="rotate(135)"/><rect x="-1.500" y="-8" width="3" height="3.500" fill="#e6e6e6" transform="rotate(180)"/><rect x="-1.500" y="-8" width="3" height="3.500" fill="#e6e6e6" transform="rotate(225)"/><rect x="-1.500" y="-8" width="3" height="3.500" fill="#e6e6e6" transform="rotate(270)"/><rect x="-1.500" y="-8" width="3" height="3.500" fill="#e6e6e6" transform="rotate(315)"/></g><path d="M747.8 663.7h6.400l-3.200 3.800z" fill="#dcdcdc"/><path d="M764 665.500h16M772 657.500v16" stroke="#e6e6e6" stroke-width="1.700"/><rect x="794.500" y="657.500" width="6" height="16" fill="#e6e6e6"/><path d="M798 660.500h5M798 664h3.500M798 667.500h5M798 671h3.500" stroke="#e6e6e6" stroke-width="1.400"/><path d="M872.8 663.7h6.400l-3.200 3.800z" fill="#dcdcdc"/><rect x="891" y="657.500" width="12.500" height="16" fill="none" stroke="#e6e6e6" stroke-width="1.300"/><path d="M893.500 661.500h2M897 661.500h4.500M893.500 665.500h2M897 665.500h4.500M893.500 669.500h2M897 669.500h4.500" stroke="#e6e6e6" stroke-width="1.300"/><rect x="916.500" y="658" width="14" height="11.500" fill="none" stroke="#e6e6e6" stroke-width="1.300"/><path d="M916.500 659h14" stroke="#e6e6e6" stroke-width="2"/><rect x="926" y="667" width="7" height="6" fill="#e6e6e6" stroke="#3b4453" stroke-width="1"/><path d="M927.500 667v-1.500a2 2 0 0 1 4 0" fill="none" stroke="#e6e6e6" stroke-width="1.100"/><path d="M940.8 663.7h6.400l-3.200 3.800z" fill="#dcdcdc"/><rect x="957.500" y="657.500" width="6" height="6" fill="none" stroke="#e6e6e6" stroke-width="1.100"/><circle cx="969.500" cy="663.500" r="3" fill="none" stroke="#e6e6e6" stroke-width="1.100"/><path d="M963 666.500l3.500 6.500h-7z" fill="none" stroke="#e6e6e6" stroke-width="1.100"/><circle cx="992" cy="665.500" r="7.800" fill="#6f87a9" stroke="#b4b8c0" stroke-width="1.200"/><path d="M991.800 669l6-6" stroke="#b4b8c0" stroke-width="1.600" stroke-linecap="round"/><rect x="1011.500" y="659.500" width="15.500" height="11" fill="none" stroke="#e6e6e6" stroke-width="1.300"/><path d="M1021.500 664.500l3-3M1022 661.300h2.700v2.700M1017.500 665.500l-3 3M1017 668.700h-2.700v-2.700" fill="none" stroke="#e6e6e6" stroke-width="1.200"/><path d="M1035 659.500h15.800M1035 665.500h15.800M1035 671.500h15.800" stroke="#e6e6e6" stroke-width="1.900"/></svg>
</div>

</div></div>
</body>
</html>
